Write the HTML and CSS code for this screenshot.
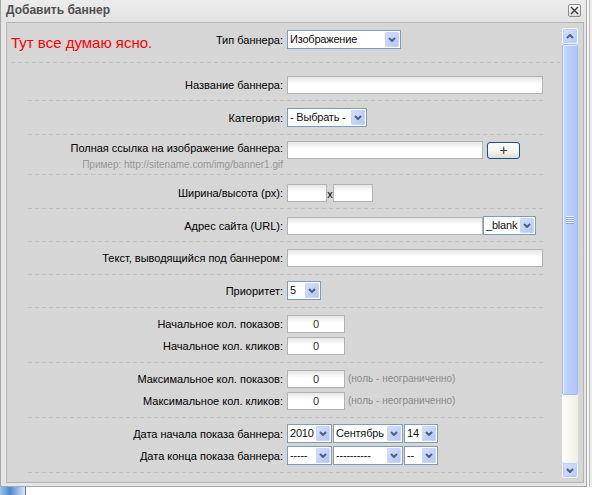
FILE: index.html
```html
<!DOCTYPE html>
<html>
<head>
<meta charset="utf-8">
<title>Добавить баннер</title>
<link rel="stylesheet" href="styles.css">
</head>
<body>
<div class="desk">
  <div class="top">
    <div class="win">
      <div class="titlebar">
        <span class="title">Добавить баннер</span>
        <span class="close"><svg width="11" height="11" viewBox="0 0 11 11"><path d="M2 2L9 9M9 2L2 9" stroke="#3a3a3a" stroke-width="1.4" fill="none"/></svg></span>
      </div>
      <div class="frame">
        <div class="panel">
          <div class="content">
            <div class="sec1">
              <div class="head">
                <span class="red">Тут все думаю ясно.</span>
                <span class="lbl">Тип баннера:</span>
              </div>
              <div class="sel w114"><span class="val">Изображение</span><span class="dd"><svg width="8" height="5" viewBox="0 0 8 5"><path d="M1 1l3 3 3-3" fill="none" stroke="#4d6185" stroke-width="2"/></svg></span></div>
            </div>

            <div class="sec pt12 pb7">
              <div class="row"><span class="lbl">Название баннера:</span><div class="ctl"><input class="inp w256" type="text"></div></div>
            </div>

            <div class="sec pt7">
              <div class="row"><span class="lbl">Категория:</span><div class="ctl"><div class="sel w80"><span class="val">- Выбрать -</span><span class="dd"><svg width="8" height="5" viewBox="0 0 8 5"><path d="M1 1l3 3 3-3" fill="none" stroke="#4d6185" stroke-width="2"/></svg></span></div></div></div>
            </div>

            <div class="sec pb4">
              <div class="row tall">
                <div class="lbl"><div class="main">Полная ссылка на изображение баннера:</div><div class="hint">Пример: http://sitename.com/img/banner1.gif</div></div>
                <div class="ctl"><input class="inp w196" type="text"><span class="plus">+</span></div>
              </div>
            </div>

            <div class="sec pt8 pb7">
              <div class="row"><span class="lbl">Ширина/высота (px):</span><div class="ctl"><input class="inp w40" type="text"><span class="times">x</span><input class="inp w40" type="text"></div></div>
            </div>

            <div class="sec pt7 pb7">
              <div class="row"><span class="lbl">Адрес сайта (URL):</span><div class="ctl"><input class="inp w196" type="text"><div class="sel w53"><span class="val">_blank</span><span class="dd"><svg width="8" height="5" viewBox="0 0 8 5"><path d="M1 1l3 3 3-3" fill="none" stroke="#4d6185" stroke-width="2"/></svg></span></div></div></div>
            </div>

            <div class="sec">
              <div class="row"><span class="lbl">Текст, выводящийся под баннером:</span><div class="ctl"><input class="inp w256" type="text"></div></div>
            </div>

            <div class="sec">
              <div class="row"><span class="lbl">Приоритет:</span><div class="ctl"><div class="sel w34"><span class="val">5</span><span class="dd"><svg width="8" height="5" viewBox="0 0 8 5"><path d="M1 1l3 3 3-3" fill="none" stroke="#4d6185" stroke-width="2"/></svg></span></div></div></div>
            </div>

            <div class="sec">
              <div class="row"><span class="lbl">Начальное кол. показов:</span><div class="ctl"><input class="inp w58 num" type="text" value="0"></div></div>
              <div class="row"><span class="lbl">Начальное кол. кликов:</span><div class="ctl"><input class="inp w58 num" type="text" value="0"></div></div>
            </div>

            <div class="sec">
              <div class="row"><span class="lbl">Максимальное кол. показов:</span><div class="ctl"><input class="inp w58 num" type="text" value="0"><span class="note">(ноль - неограниченно)</span></div></div>
              <div class="row"><span class="lbl">Максимальное кол. кликов:</span><div class="ctl"><input class="inp w58 num" type="text" value="0"><span class="note">(ноль - неограниченно)</span></div></div>
            </div>

            <div class="sec">
              <div class="row"><span class="lbl">Дата начала показа баннера:</span>
                <div class="ctl dates">
                  <div class="sel w45"><span class="val">2010</span><span class="dd"><svg width="8" height="5" viewBox="0 0 8 5"><path d="M1 1l3 3 3-3" fill="none" stroke="#4d6185" stroke-width="2"/></svg></span></div>
                  <div class="sel w70"><span class="val">Сентябрь</span><span class="dd"><svg width="8" height="5" viewBox="0 0 8 5"><path d="M1 1l3 3 3-3" fill="none" stroke="#4d6185" stroke-width="2"/></svg></span></div>
                  <div class="sel w34"><span class="val">14</span><span class="dd"><svg width="8" height="5" viewBox="0 0 8 5"><path d="M1 1l3 3 3-3" fill="none" stroke="#4d6185" stroke-width="2"/></svg></span></div>
                </div>
              </div>
              <div class="row"><span class="lbl">Дата конца показа баннера:</span>
                <div class="ctl dates">
                  <div class="sel w45"><span class="val">-----</span><span class="dd"><svg width="8" height="5" viewBox="0 0 8 5"><path d="M1 1l3 3 3-3" fill="none" stroke="#4d6185" stroke-width="2"/></svg></span></div>
                  <div class="sel w70"><span class="val">----------</span><span class="dd"><svg width="8" height="5" viewBox="0 0 8 5"><path d="M1 1l3 3 3-3" fill="none" stroke="#4d6185" stroke-width="2"/></svg></span></div>
                  <div class="sel w34"><span class="val">--</span><span class="dd"><svg width="8" height="5" viewBox="0 0 8 5"><path d="M1 1l3 3 3-3" fill="none" stroke="#4d6185" stroke-width="2"/></svg></span></div>
                </div>
              </div>
            </div>
          </div>

          <div class="scroll">
            <div class="sbtn"><svg width="8" height="5" viewBox="0 0 8 5"><path d="M1 4l3-3 3 3" fill="none" stroke="#4d6185" stroke-width="2"/></svg></div>
            <div class="track">
              <div class="thumb"><span class="grip"></span></div>
            </div>
            <div class="sbtn"><svg width="8" height="5" viewBox="0 0 8 5"><path d="M1 1l3 3 3-3" fill="none" stroke="#4d6185" stroke-width="2"/></svg></div>
          </div>
        </div>
      </div>
    </div>
    <div class="rstrip"></div>
  </div>
  <div class="bottom"><span class="icon"></span></div>
</div>
</body>
</html>
```

FILE: styles.css
```css
html, body {
  margin: 0;
  padding: 0;
}
body {
  background: #ffffff;
  font-family: "Liberation Sans", Arial, sans-serif;
  font-size: 11px;
  color: #000;
}
.desk {
  width: 592px;
  height: 495px;
  overflow: hidden;
}
.top {
  display: flex;
  height: 487px;
}
.win {
  width: 587px;
  height: 487px;
  box-sizing: border-box;
  border: 1px solid #a9a9a9;
  border-top: 0;
  background: #e6e6e6;
  display: flex;
  flex-direction: column;
}
.titlebar {
  height: 22px;
  display: flex;
  justify-content: space-between;
  align-items: flex-start;
  background: linear-gradient(#ececec, #e3e3e3);
}
.title {
  font-weight: bold;
  font-size: 12px;
  color: #4f4f4f;
  line-height: 20px;
  padding-left: 5px;
}
.close {
  width: 13px;
  height: 13px;
  box-sizing: border-box;
  margin: 4px 5px 0 0;
  border: 1px solid #8c8c8c;
  border-radius: 2px;
  background: linear-gradient(#fbfbfb, #dadada);
  display: flex;
  align-items: center;
  justify-content: center;
}
.close svg { display: block; }
.frame {
  padding: 0 2px 3px 5px;
}
.panel {
  width: 578px;
  height: 461px;
  box-sizing: border-box;
  border: 1px solid #b4b4b4;
  background: #d6d6d6;
  display: flex;
}
.content {
  width: 555px;
  height: 459px;
  overflow: hidden;
}

/* dashed separators */
.sec1, .sec {
  background-image: repeating-linear-gradient(to right, #c1c1c1 0 4px, transparent 4px 7px);
  background-size: 100% 1px;
  background-position: left bottom;
  background-repeat: no-repeat;
}
.sec1 {
  margin-left: 4px;
  width: 549px;
  padding: 7px 0 14px;
  display: grid;
  grid-template-columns: 272px auto;
  column-gap: 4px;
  align-items: center;
}
.head {
  height: 19px;
  display: flex;
  justify-content: space-between;
  align-items: center;
}
.red {
  color: #ff0000;
  font-size: 15px;
  line-height: 19px;
  margin-top: 6px;
  white-space: nowrap;
}
.sec {
  margin-left: 21px;
  width: 515px;
  padding: 6px 0 8px;
}
.pt7 { padding-top: 7px; }
.pt8 { padding-top: 8px; }
.pt12 { padding-top: 12px; }
.pb7 { padding-bottom: 7px; }
.pb4 { padding-bottom: 4px; }

.row {
  display: grid;
  grid-template-columns: 255px 256px;
  column-gap: 4px;
  align-items: center;
  height: 19px;
}
.row + .row { margin-top: 3px; }
.row.tall {
  height: auto;
  align-items: start;
}
.lbl {
  text-align: right;
  white-space: nowrap;
  color: #000;
}
.lbl .main { line-height: 15px; }
.lbl .hint {
  font-size: 10px;
  line-height: 13px;
  margin-top: 2px;
  color: #979797;
}
.ctl {
  display: flex;
  align-items: center;
  height: 19px;
}
.row.tall .ctl { height: 18px; }

.inp {
  height: 18px;
  box-sizing: border-box;
  margin: 0;
  border: 1px solid #b3b3b3;
  background: linear-gradient(#e6e6e6, #ffffff 7px, #ffffff);
  padding: 0 3px;
  font-family: inherit;
  font-size: 11px;
  color: #333;
  outline: none;
}
.num { text-align: center; }
.w256 { width: 256px; }
.w196 { width: 196px; }
.w58 { width: 58px; }
.w40 { width: 40px; }
.w114 { width: 114px; }
.w80 { width: 80px; }
.w70 { width: 70px; }
.w53 { width: 53px; }
.w45 { width: 45px; }
.w34 { width: 34px; }

.times {
  width: 6px;
  text-align: center;
  font-size: 11px;
  line-height: 12px;
  margin-top: 2px;
}
.plus {
  width: 33px;
  height: 17px;
  box-sizing: border-box;
  margin-left: 4px;
  border: 1px solid #1f4e86;
  border-radius: 3px;
  background: linear-gradient(#ffffff, #f3f2ee 60%, #dedcd4);
  color: #333;
  font-size: 14px;
  line-height: 14px;
  text-align: center;
}
.note {
  margin-left: 3px;
  font-size: 10px;
  color: #8a8a8a;
  white-space: nowrap;
}

.sel {
  height: 19px;
  box-sizing: border-box;
  border: 1px solid #7f9db9;
  background: #ffffff;
  display: flex;
  align-items: center;
  flex-shrink: 0;
}
.sel .val {
  flex: 1;
  padding-left: 2px;
  white-space: nowrap;
  overflow: hidden;
  line-height: 17px;
  color: #111;
  letter-spacing: -0.2px;
}
.sel .dd {
  width: 14px;
  height: 15px;
  flex-shrink: 0;
  box-sizing: border-box;
  margin-right: 1px;
  border: 1px solid #c9d7fb;
  border-radius: 1px;
  background: linear-gradient(135deg, #d3defd, #b3c7f6);
  display: flex;
  align-items: center;
  justify-content: center;
}
.sel svg, .sbtn svg { display: block; }
.dates { gap: 1px; }

/* scrollbar */
.scroll {
  width: 16px;
  margin: 5px 0 4px;
  display: flex;
  flex-direction: column;
}
.sbtn {
  height: 16px;
  box-sizing: border-box;
  border: 1px solid #f2f6ff;
  border-radius: 2px;
  background: linear-gradient(135deg, #d6e2fe, #b6caf7);
  box-shadow: inset 0 0 0 1px #bccffa;
  display: flex;
  align-items: center;
  justify-content: center;
}
.track {
  flex: 1;
  background: linear-gradient(to right, #fefefb, #f0efe6);
}
.thumb {
  height: 351px;
  box-sizing: border-box;
  border: 1px solid #a3b9ee;
  border-radius: 2px;
  background: linear-gradient(to right, #c9d9fd, #bacefa 40%, #b2c7f6);
  box-shadow: inset 1px 1px 0 #e6eeff;
  display: flex;
  align-items: center;
  justify-content: center;
}
.grip {
  width: 8px;
  height: 8px;
  background: repeating-linear-gradient(#eef3ff 0 1px, #8ca7e6 1px 2px);
}

.rstrip {
  flex: 1;
  background: #ececec;
  border-left: 2px solid #f8f8f8;
  box-shadow: inset 1px 0 0 #b8b8b8;
}
.bottom {
  height: 8px;
  display: flex;
  background: #ffffff;
}
.icon {
  width: 25px;
  height: 8px;
  border-right: 1px solid #7a7a7a;
  background: linear-gradient(to right, #9cc4ee, #4f87c9 40%, #d8e8f8);
}
```
